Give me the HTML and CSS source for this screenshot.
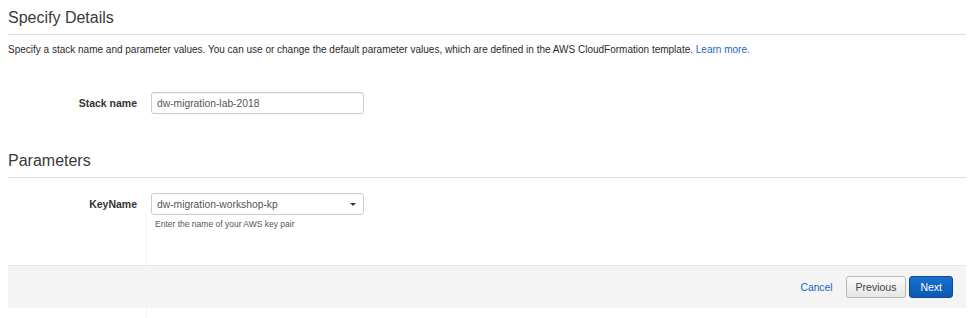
FILE: index.html
```html
<!DOCTYPE html>
<html lang="en">
<head>
  <meta charset="UTF-8" />
  <title>Specify Details</title>
  <link rel="stylesheet" href="styles.css">
</head>
<body>
<div class="page">
  <h2 class="section-title">Specify Details</h2>
  <p class="intro">Specify a stack name and parameter values. You can use or change the default parameter values, which are defined in the AWS CloudFormation template. <a href="#">Learn more.</a></p>

  <div class="form-row stack-row">
    <label class="field-label">Stack name</label>
    <div class="field">
      <input class="text-input" type="text" value="dw-migration-lab-2018">
    </div>
  </div>

  <h2 class="section-title params-title">Parameters</h2>

  <div class="form-row key-row">
    <label class="field-label">KeyName</label>
    <div class="field">
      <div class="select-box">
        <span>dw-migration-workshop-kp</span>
        <span class="caret"></span>
      </div>
    </div>
  </div>
  <div class="help-col">
    <div class="help">Enter the name of your AWS key pair</div>
  </div>

  <!-- footer with wizard buttons -->
  <div class="footer">
    <a class="cancel" href="#">Cancel</a>
    <button class="btn">Previous</button>
    <button class="btn btn-primary">Next</button>
  </div>
  <div class="help-col tail"></div>
</div>
</body>
</html>
```

FILE: styles.css
```css
html, body {
  margin: 0;
  padding: 0;
  background: #fff;
  font-family: "Liberation Sans", Arial, Helvetica, sans-serif;
  color: #333;
}
.page {
  padding: 0 8px;
}
.section-title {
  margin: 8px 0 0;
  padding-bottom: 6px;
  font-size: 16px;
  line-height: 20px;
  font-weight: normal;
  color: #3a3a3a;
  border-bottom: 1px solid #ddd;
}
.params-title {
  margin-top: 37px;
}
.intro {
  margin: 8px 0 0;
  font-size: 10px;
  line-height: 14px;
  color: #2b2b2b;
}
.intro a {
  color: #1a66c2;
  text-decoration: none;
}
.form-row {
  display: flex;
  align-items: center;
}
.stack-row {
  margin-top: 35px;
}
.key-row {
  margin-top: 15px;
}
.field-label {
  width: 129px;
  padding-right: 14px;
  text-align: right;
  font-size: 10.5px;
  font-weight: bold;
  color: #333;
}
.field {
  width: 213px;
}
.text-input {
  box-sizing: border-box;
  display: block;
  width: 213px;
  height: 22px;
  margin: 0;
  padding: 0 5px;
  border: 1px solid #ccc;
  border-radius: 3px;
  box-shadow: inset 0 1px 1px rgba(0,0,0,0.06);
  font-family: inherit;
  font-size: 10.3px;
  color: #555;
}
.select-box {
  box-sizing: border-box;
  height: 22px;
  display: flex;
  align-items: center;
  justify-content: space-between;
  padding: 0 7px 0 5px;
  border: 1px solid #ccc;
  border-radius: 3px;
  background: #fff;
  font-size: 10.3px;
  color: #555;
}
.caret {
  width: 0;
  height: 0;
  border-left: 3px solid transparent;
  border-right: 3px solid transparent;
  border-top: 3px solid #333;
}
.help-col {
  margin-left: 138px;
  height: 50px;
  border-left: 1px solid #f3f3f3;
}
.help {
  padding: 3px 0 0 8px;
  font-size: 8.5px;
  line-height: 13px;
  color: #555;
}
.tail {
  height: 12px;
}
.footer {
  display: flex;
  align-items: center;
  justify-content: flex-end;
  height: 42px;
  padding-right: 13px;
  background: #f4f4f4;
  border-top: 1px solid #e6e6e6;
}
.cancel {
  margin-right: 10px;
  font-size: 10.3px;
  color: #1a66c2;
  text-decoration: none;
}
.btn {
  height: 22px;
  margin-left: 3px;
  padding: 0 9px;
  border: 1px solid #b8b8b8;
  border-radius: 3px;
  background: linear-gradient(to bottom, #fafafa, #e6e6e6);
  font-family: inherit;
  font-size: 10.5px;
  color: #444;
}
.btn-primary {
  padding: 0 10px;
  border-color: #0a4b94;
  background: linear-gradient(to bottom, #1a6fd0, #0a58b4);
  color: #fff;
}
```
